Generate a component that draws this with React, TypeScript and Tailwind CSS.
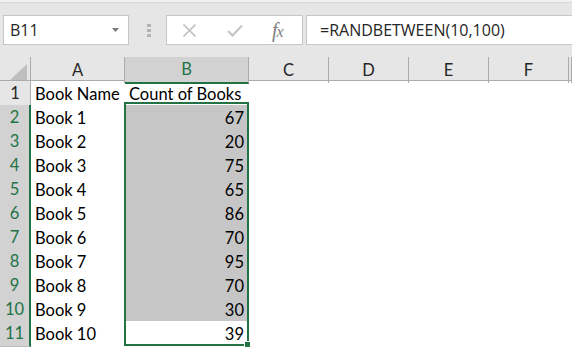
import React from "react";

const rows: [string, number][] = [
  ["Book 1", 67],
  ["Book 2", 20],
  ["Book 3", 75],
  ["Book 4", 65],
  ["Book 5", 86],
  ["Book 6", 70],
  ["Book 7", 95],
  ["Book 8", 70],
  ["Book 9", 30],
  ["Book 10", 39],
];

const cols = ["A", "B", "C", "D", "E", "F", ""];
const grid = "grid grid-cols-[31px_94px_124px_80px_80px_80px_80px_1fr]";
const cellFont = { fontFamily: "Lato, 'Noto Sans', sans-serif" };

export default function App() {
  return (
    <div className="w-[572px] h-[347px] overflow-hidden bg-white relative" style={cellFont}>
      {/* Formula bar */}
      <div className="bg-[#e6e6e6]">
        <div className="h-[2px] bg-[#f1f1f1]" />
        <div className="h-px bg-[#d6d6d6]" />
        <div className="flex items-center pt-[12px] pb-[12px]">
          <div className="ml-[3px] w-[126px] h-[30px] bg-white border border-[#c6c6c6] flex items-center justify-between pl-[6px] pr-[9px]">
            <span className="text-[16px] text-[#262626]" style={{ fontFamily: "'Open Sans', sans-serif" }}>B11</span>
            <svg width="7" height="4" viewBox="0 0 7 4"><path d="M0 0H7L3.5 4Z" fill="#7a7a7a" /></svg>
          </div>
          <div className="ml-[18px] flex flex-col gap-[2px]">
            <div className="w-[4px] h-[3px] bg-[#b4b4b4]" />
            <div className="w-[4px] h-[3px] bg-[#b4b4b4]" />
            <div className="w-[4px] h-[3px] bg-[#b4b4b4]" />
          </div>
          <div className="ml-[15px] w-[137px] h-[30px] bg-white border border-[#c6c6c6] flex items-center">
            <svg className="ml-[16px]" width="13" height="13" viewBox="0 0 13 13">
              <path d="M0.5 0.5L12.5 12.5M12.5 0.5L0.5 12.5" stroke="#c3c3c3" strokeWidth="1.6" />
            </svg>
            <svg className="ml-[31px]" width="16" height="13" viewBox="0 0 16 13">
              <path d="M1 7L5.5 11.5L15 1.5" stroke="#c3c3c3" strokeWidth="2" fill="none" />
            </svg>
            <span className="ml-[29px] text-[20px] italic text-[#7f7f7f] leading-none" style={{ fontFamily: "'Liberation Serif', serif" }}>
              <span className="tracking-[-1px]">f</span><span className="text-[16px]">x</span>
            </span>
          </div>
          <div className="ml-[3px] flex-1 -mr-[2px] h-[30px] bg-white border border-[#c6c6c6] flex items-center pl-[13px]">
            <span className="text-[16px] text-[#262626]" style={{ fontFamily: "'Open Sans', sans-serif" }}>=RANDBETWEEN(10,100)</span>
          </div>
        </div>
      </div>

      {/* Column headers */}
      <div className={`${grid} h-[24px] bg-[#e6e6e6] border-b border-[#ababab]`}>
        <div className="border-r border-[#ababab] relative">
          <svg className="absolute right-[3px] bottom-[3px]" width="17" height="16" viewBox="0 0 17 16">
            <path d="M17 0V16H0Z" fill="#bfbfbf" />
          </svg>
        </div>
        {cols.map((c, i) => (
          <div
            key={i}
            className={
              c === "B"
                ? "flex items-center justify-center bg-[#d2d2d2] text-[#217346] border-r border-[#ababab] border-b-2 border-b-[#217346] -mb-px text-[16.5px]"
                : "flex items-center justify-center text-[#262626] border-r border-[#ababab] text-[16.5px]"
            }
          >
            {c}
          </div>
        ))}
      </div>

      {/* Row 1 */}
      <div className={`${grid} h-[24px]`}>
        <div className="bg-[#e6e6e6] border-r border-[#ababab] border-b border-b-[#c9c9c9] flex items-center justify-center text-[16.5px] text-[#262626]">1</div>
        <div className="flex items-center pl-[4px] text-[16.5px] text-black whitespace-nowrap">Book Name</div>
        <div className="flex items-center pl-[4px] text-[16.5px] text-black whitespace-nowrap">Count of Books</div>
        <div /><div /><div /><div /><div />
      </div>

      {rows.map(([name, n], i) => {
        const active = i === rows.length - 1;
        return (
          <div key={name} className={`${grid} h-[24px]`}>
            <div className="bg-[#d2d2d2] border-r-2 border-[#217346] border-b border-b-[#bcbcbc] flex items-center justify-center text-[16.5px] text-[#217346]">
              {i + 2}
            </div>
            <div className="flex items-center pl-[4px] text-[16.5px] text-black whitespace-nowrap">{name}</div>
            <div className={`flex items-center justify-end pr-[5px] text-[16.5px] text-black ${active ? "bg-white" : "bg-[#c6c6c6]"}`}>{n}</div>
            <div /><div /><div /><div /><div />
          </div>
        );
      })}

      {/* Selection overlay */}
      <div className="absolute left-[124px] top-[102px] w-[125px] h-[244px] border-2 border-[#217346] pointer-events-none" />
      <div className="absolute left-[245px] top-[342px] w-[5px] h-[5px] bg-[#217346] border border-white box-content -translate-x-px -translate-y-px" />
    </div>
  );
}
